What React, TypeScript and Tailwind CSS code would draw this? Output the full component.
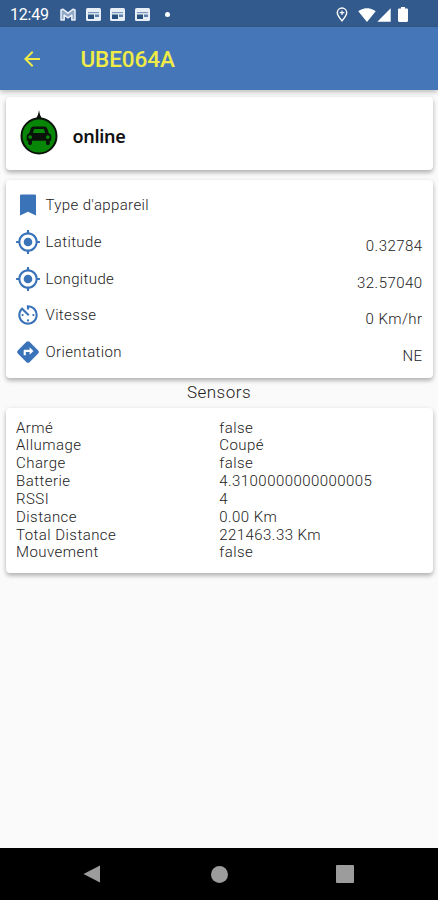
import React from 'react';
import {
  MdArrowBack,
  MdAvTimer,
  MdDirections,
  MdMyLocation,
  MdSignalCellular4Bar,
  MdSignalWifi4Bar,
} from 'react-icons/md';

type IconProps = { className?: string };
type Detail = { icon: React.ComponentType<IconProps>; label: string; value: string };

const BookmarkIcon = ({ className }: IconProps) => (
  <svg viewBox="0 0 26 26" className={className} fill="currentColor">
    <path d="M5 4c0-1 .5-1.500 1.500-1.500h13c1 0 1.500.5 1.500 1.500v19.500l-8-3.800-8 3.800z" />
  </svg>
);

const details: Detail[] = [
  { icon: BookmarkIcon, label: "Type d'appareil", value: '' },
  { icon: MdMyLocation, label: 'Latitude', value: '0.32784' },
  { icon: MdMyLocation, label: 'Longitude', value: '32.57040' },
  { icon: MdAvTimer, label: 'Vitesse', value: '0 Km/hr' },
  { icon: MdDirections, label: 'Orientation', value: 'NE' },
];

const sensors = [
  { label: 'Armé', value: 'false' },
  { label: 'Allumage', value: 'Coupé' },
  { label: 'Charge', value: 'false' },
  { label: 'Batterie', value: '4.3100000000000005' },
  { label: 'RSSI', value: '4' },
  { label: 'Distance', value: '0.00 Km' },
  { label: 'Total Distance', value: '221463.33 Km' },
  { label: 'Mouvement', value: 'false' },
];

const GmailIcon = () => (
  <svg viewBox="0 0 16 13" className="h-[13px] w-[16px]" fill="#8ea6c6" stroke="#e8eef6" strokeWidth="1.5" strokeLinejoin="round">
    <path d="M1 12V2l1.800-.8L8 5.200l5.200-4L15 2v10h-3.200V7L8 9.800 4.200 7v5z" />
  </svg>
);

const NewsIcon = () => (
  <svg viewBox="0 0 15 13" className="h-[13px] w-[15px]">
    <rect width="15" height="13" rx="1.5" fill="#e8eef6" />
    <path d="M2 4h11v1.200H2z" fill="#7d98bd" />
    <path d="M2 6.500h6V11H2z" fill="#28507f" />
    <path d="M9 6.500h4V9H9z" fill="#5f81ad" />
  </svg>
);

const LocationIcon = () => (
  <svg viewBox="0 0 12 15" className="h-[15px] w-[12px]" fill="none" stroke="#fff" strokeWidth="1.4">
    <path d="M6 13.800C3.500 10.800 1.300 8.400 1.300 5.700a4.700 4.700 0 0 1 9.400 0c0 2.700-2.200 5.100-4.700 8.100z" />
    <path d="M6 3.400v4.600M3.700 5.700h4.600" strokeWidth="1.200" />
  </svg>
);

const BatteryIcon = () => (
  <svg viewBox="0 0 10 15" className="ml-[6px] h-[15px] w-[10px]" fill="#fff">
    <path d="M3 0h4v1.500h1.800c.7 0 1.200.5 1.200 1.200v11.100c0 .7-.5 1.200-1.200 1.200H1.200C.5 15 0 14.500 0 13.800V2.700c0-.7.5-1.200 1.200-1.200H3z" />
  </svg>
);

const CarMarker = () => (
  <svg viewBox="0 0 38 46" className="h-[46px] w-[38px]">
    <path d="M19 0c.6 4 1.500 6.500 3.800 9.500h-7.600C17.500 6.500 18.400 4 19 0z" fill="#0b120b" />
    <circle cx="19" cy="26" r="17.500" fill="#078607" stroke="#0b120b" strokeWidth="2" />
    <path
      fillRule="evenodd"
      fill="#0b120b"
      d="M13.800 16.500h10.400c1.700 0 2.500.8 3 2l1.600 4.700c1.500.6 2.500 1.700 2.500 3.300v4.300h-1.500v2.200c0 2.800-3.800 2.800-3.800 0v-2.200H12v2.200c0 2.800-3.800 2.800-3.800 0v-2.200H6.700v-4.300c0-1.600 1-2.700 2.500-3.300l1.600-4.700c.5-1.200 1.300-2 3-2zm.4 2.400-1.400 4.100h12.400l-1.400-4.100zM10.200 25.200a1.900 1.900 0 1 0 0 3.800 1.900 1.900 0 0 0 0-3.800zm17.600 0a1.900 1.900 0 1 0 0 3.800 1.900 1.900 0 0 0 0-3.800z"
    />
  </svg>
);

const StatusBar = () => (
  <div className="flex h-[27px] items-center bg-[#325a8c] pt-[2px] pl-[10px] pr-[30px] text-white">
    <span className="w-[50px] text-[16px] leading-none tracking-[-0.2px]">12:49</span>
    <div className="flex items-center gap-[9.500px]">
      <GmailIcon />
      <NewsIcon />
      <NewsIcon />
      <NewsIcon />
    </div>
    <span className="ml-[15px] h-[5px] w-[5px] rounded-full bg-white" />
    <div className="ml-auto flex items-center">
      <LocationIcon />
      <MdSignalWifi4Bar className="ml-[10px] h-[18px] w-[18px]" />
      <MdSignalCellular4Bar className="h-[16px] w-[16px]" />
      <BatteryIcon />
    </div>
  </div>
);

const Card = ({ className, children }: { className: string; children: React.ReactNode }) => (
  <div className={`mx-[5.500px] rounded-[4px] bg-white shadow-[0_3px_4px_rgba(0,0,0,0.22),0_1px_5px_rgba(0,0,0,0.10)] ${className}`}>
    {children}
  </div>
);

const App = () => {
  return (
    <div className="flex h-[900px] w-[438px] flex-col overflow-hidden bg-[#fafafa] font-['Roboto',sans-serif] text-[#222]">
      <StatusBar />

      {/* App bar */}
      <header className="flex h-[62.500px] shrink-0 items-center bg-[#4577b8] pt-[1px] pl-[20px] text-[#f0ec45] shadow-[0_2px_5px_rgba(0,0,0,0.25)]">
        <MdArrowBack className="h-[24px] w-[24px]" />
        <h1 className="ml-[36.500px] text-[22.500px] leading-none font-medium tracking-[-0.1px]">UBE064A</h1>
      </header>

      <main className="flex-1 pt-[7px]">
        <Card className="flex h-[73px] items-center pl-[14.500px]">
          <CarMarker />
          <span className="ml-[14.500px] pt-[6px] font-['Noto_Sans',sans-serif] text-[18px] leading-none font-semibold tracking-[-0.3px] text-[#111]">
            online
          </span>
        </Card>

        <Card className="mt-[10px] h-[198px] pt-[7.500px] pr-[10px] pl-[9px]">
          {details.map(({ icon: Icon, label, value }) => (
            <div key={label} className="flex h-[36.700px] items-center">
              <Icon className="h-[26px] w-[26px] text-[#3b73b9]" />
              <span className="ml-[5px] pt-[1px] text-[15px] leading-none font-light tracking-[0.37px]">{label}</span>
              <span className="ml-auto pt-[9px] text-[15px] leading-none font-light tracking-[0.45px]">{value}</span>
            </div>
          ))}
        </Card>

        <h2 className="flex h-[30px] items-center justify-center pb-[1px] text-[17px] leading-none font-light tracking-[0.5px]">
          Sensors
        </h2>

        <Card className="h-[165px] pt-[12px] pr-[10px] pl-[10.500px]">
          {sensors.map((sensor) => (
            <div key={sensor.label} className="grid h-[17.850px] grid-cols-2 text-[15px] leading-[17.850px] font-light tracking-[0.45px]">
              <span>{sensor.label}</span>
              <span>{sensor.value}</span>
            </div>
          ))}
        </Card>
      </main>

      {/* Android navigation */}
      <nav className="flex h-[52px] shrink-0 items-center justify-between bg-black pr-[84px] pl-[83px]">
        <svg viewBox="0 0 18 18" className="h-[18px] w-[18px]" fill="#9c9c9c">
          <path d="M17 0.500v17L0.500 9z" />
        </svg>
        <span className="ml-[1px] h-[17px] w-[17px] rounded-full bg-[#9c9c9c]" />
        <span className="h-[18px] w-[18px] rounded-[1px] bg-[#9c9c9c]" />
      </nav>
    </div>
  );
};

export default App;
